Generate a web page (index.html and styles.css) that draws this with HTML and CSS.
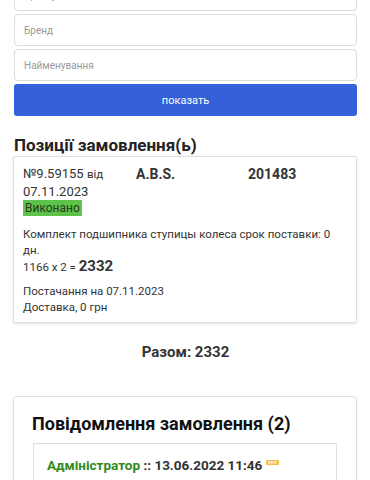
FILE: index.html
```html
<!DOCTYPE html>
<html lang="uk">
<head>
<meta charset="utf-8">
<link rel="stylesheet" href="styles.css">
</head>
<body>
<div class="page">
  <form class="filters">
    <input class="field field-first" type="text" placeholder="Артикул">
    <input class="field" type="text" placeholder="Бренд">
    <input class="field" type="text" placeholder="Найменування">
    <button class="btn" type="button">показать</button>
  </form>

  <h2 class="title">Позиції замовлення(ь)</h2>
  <div class="card">
    <div class="row">
      <div class="col"><span class="num">№9.59155</span> <span class="small">від</span></div>
      <div class="col bold">A.B.S.</div>
      <div class="col bold">201483</div>
    </div>
    <div class="line">07.11.2023</div>
    <div class="badge-row"><span class="status">Виконано</span></div>
    <div class="desc">Комплект подшипника ступицы колеса срок поставки: 0 дн.</div>
    <div class="calc">1166 x 2 = <b class="sum">2332</b></div>
    <div class="supply">
      <div>Постачання на 07.11.2023</div>
      <div>Доставка, 0 грн</div>
    </div>
  </div>

  <div class="total">Разом: 2332</div>

  <div class="msgs">
    <h2 class="msgs-title">Повідомлення замовлення (2)</h2>
    <div class="msg">
      <div class="msg-head"><span class="author">Адміністратор</span> :: 13.06.2022 11:46 <span class="new">new</span></div>
      <div class="msg-text">прошло</div>
    </div>
  </div>
</div>
</body>
</html>
```
FILE: styles.css
```css
* { box-sizing: border-box; }
html, body { margin: 0; padding: 0; background: #fff; }
body {
  font-family: Roboto, "Liberation Sans", Arial, sans-serif;
  color: #333;
  overflow: hidden;
  height: 480px;
}
.page { padding: 0 13px 0 14px; }
.filters { display: flex; flex-direction: column; gap: 3px; }
.field {
  display: block;
  width: 343px;
  height: 32px;
  border: 1px solid #dcdcdc;
  border-radius: 4px;
  padding: 0 9px;
  font-family: Roboto, "Liberation Sans", Arial, sans-serif;
  font-size: 10px;
  color: #555;
  background: #fff;
  outline: none;
}
.field::placeholder { color: #9a9a9a; }
.field-first { margin-top: -21px; }
.btn {
  display: block;
  width: 343px;
  height: 32px;
  border: 0;
  border-radius: 3px;
  background: #3461d8;
  color: #fff;
  font-family: Roboto, "Liberation Sans", Arial, sans-serif;
  font-size: 11px;
}
.title {
  margin: 19px 0 1px;
  font-size: 17px;
  line-height: 20px;
  font-weight: 700;
  color: #222;
}
.card {
  margin-left: -1px;
  width: 344px;
  border: 1px solid #dedede;
  border-radius: 2px;
  box-shadow: 0 1px 3px rgba(0,0,0,0.12);
  padding: 8px 9px 7px 9px;
  font-size: 11.5px;
  line-height: 16px;
}
.row { display: grid; grid-template-columns: 113px 112px 1fr; }
.col { font-size: 13px; line-height: 18px; }
.num { font-size: 13px; }
.small { font-size: 11.5px; }
.bold { font-weight: 700; font-size: 14px; }
.line { font-size: 13px; line-height: 17px; }
.badge-row { margin-top: 0; height: 16px; }
.status {
  display: inline-block;
  background: #5cc248;
  color: #2a3a20;
  font-size: 12px;
  line-height: 16px;
  padding: 0 2px 0 2px;
  border-radius: 1px;
}
.desc { margin-top: 10px; }
.calc { line-height: 17px; }
.sum { font-size: 15px; }
.supply { margin-top: 7px; }
.total {
  text-align: center;
  font-weight: 700;
  font-size: 15px;
  margin: 20px 0 0;
  line-height: 18px;
  color: #333;
}
.msgs {
  margin-top: 35px;
  margin-left: -1px;
  width: 344px;
  border: 1px solid #dedede;
  border-radius: 4px;
  box-shadow: 0 1px 3px rgba(0,0,0,0.08);
  padding: 16px 19px 10px 18px;
}
.msgs-title {
  margin: 0 0 8px;
  font-size: 18px;
  line-height: 22px;
  font-weight: 700;
  color: #111;
}
.msg {
  border: 1px solid #dedede;
  padding: 12px 13px;
  margin-left: 1px;
}
.msg-head { font-weight: 700; font-size: 13.5px; line-height: 18px; color: #333; }
.author { color: #2e8b1e; }
.new {
  display: inline-block;
  vertical-align: 6px;
  background: #f5b84a;
  color: #fff3d8;
  font-size: 5px;
  line-height: 5px;
  padding: 0 2px;
  border-radius: 1px;
}
.msg-text { font-size: 13px; line-height: 17px; }
```
